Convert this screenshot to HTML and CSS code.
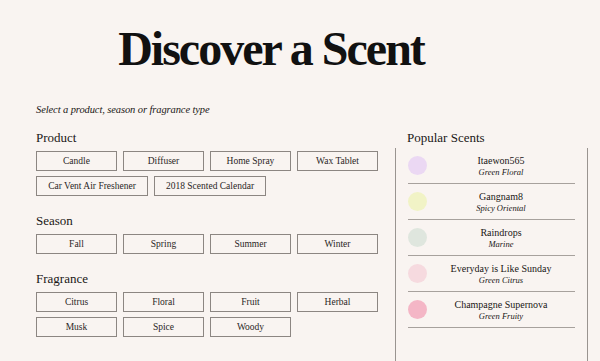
FILE: index.html
```html
<!DOCTYPE html>
<html lang="en">
<head>
  <meta charset="UTF-8" />
  <title>Discover a Scent</title>
  <link rel="stylesheet" href="styles.css">
</head>
<body>
  <h1 class="title">Discover a Scent</h1>
  <p class="intro">Select a product, season or fragrance type</p>

  <div class="layout">
    <div class="filters">
      <section class="group">
        <h2>Product</h2>
        <div class="options">
          <button class="option">Candle</button>
          <button class="option">Diffuser</button>
          <button class="option">Home Spray</button>
          <button class="option">Wax Tablet</button>
        </div>
        <div class="options options-loose">
          <button class="option wide">Car Vent Air Freshener</button>
          <button class="option wide">2018 Scented Calendar</button>
        </div>
      </section>

      <section class="group">
        <h2>Season</h2>
        <div class="options">
          <button class="option">Fall</button>
          <button class="option">Spring</button>
          <button class="option">Summer</button>
          <button class="option">Winter</button>
        </div>
      </section>

      <section class="group">
        <h2>Fragrance</h2>
        <div class="options">
          <button class="option">Citrus</button>
          <button class="option">Floral</button>
          <button class="option">Fruit</button>
          <button class="option">Herbal</button>
          <button class="option">Musk</button>
          <button class="option">Spice</button>
          <button class="option">Woody</button>
        </div>
      </section>
    </div>

    <aside class="popular">
      <h2>Popular Scents</h2>
      <ul class="scent-list">
        <li class="scent">
          <span class="dot lavender"></span>
          <div class="scent-text">
            <div class="scent-name">Itaewon565</div>
            <div class="scent-type">Green Floral</div>
          </div>
        </li>
        <li class="scent">
          <span class="dot lemon"></span>
          <div class="scent-text">
            <div class="scent-name">Gangnam8</div>
            <div class="scent-type">Spicy Oriental</div>
          </div>
        </li>
        <li class="scent">
          <span class="dot sage"></span>
          <div class="scent-text">
            <div class="scent-name">Raindrops</div>
            <div class="scent-type">Marine</div>
          </div>
        </li>
        <li class="scent">
          <span class="dot blush"></span>
          <div class="scent-text">
            <div class="scent-name">Everyday is Like Sunday</div>
            <div class="scent-type">Green Citrus</div>
          </div>
        </li>
        <li class="scent">
          <span class="dot rose"></span>
          <div class="scent-text">
            <div class="scent-name">Champagne Supernova</div>
            <div class="scent-type">Green Fruity</div>
          </div>
        </li>
      </ul>
    </aside>
  </div>
</body>
</html>
```

FILE: styles.css
```css
body {
  font-family: 'Liberation Serif', 'DejaVu Serif', serif;
  background: #f9f4f1;
  color: #1a1716;
  margin: 0;
  height: 361px;
  overflow: hidden;
}

.title {
  margin: 21px 0 0;
  font-size: 48px;
  line-height: 56px;
  font-weight: bold;
  text-align: center;
  padding-right: 58px;
  letter-spacing: -2px;
  color: #111;
}

.intro {
  margin: 25px 0 0 36px;
  font-size: 10.5px;
  line-height: 16px;
  font-style: italic;
  letter-spacing: -0.1px;
}

.layout {
  display: flex;
  margin-top: 12px;
  padding-left: 36px;
}

.filters {
  width: 341px;
}

h2 {
  margin: 0;
  font-size: 13px;
  line-height: 16px;
  font-weight: normal;
}

.group + .group {
  margin-top: 17px;
}

.options {
  display: grid;
  grid-template-columns: repeat(4, 81px);
  gap: 5px 6px;
  margin-top: 5px;
}

.options-loose {
  display: flex;
}

.option {
  height: 20px;
  padding: 0;
  background: transparent;
  border: 1px solid #8c8682;
  font-family: inherit;
  font-size: 9.5px;
  color: #2a2625;
  cursor: pointer;
}

.option.wide {
  width: 112px;
}

.popular {
  margin-left: 18px;
  width: 193px;
}

.popular h2 {
  padding-left: 12px;
}

.scent-list {
  list-style: none;
  margin: 2px 0 0;
  padding: 0 12px;
  border-left: 1px solid #9a9490;
  border-right: 1px solid #9a9490;
  height: 213px;
}

.scent {
  display: flex;
  align-items: center;
  height: 35px;
  border-bottom: 1px solid #a7a19d;
}

.dot {
  width: 19px;
  height: 19px;
  border-radius: 50%;
  flex: none;
}

.lavender { background: #ebd8f3; }
.lemon { background: #f1f3c6; }
.sage { background: #dfe6de; }
.blush { background: #f6dadf; }
.rose { background: #f4b6c6; }

.scent-text {
  flex: 1;
  text-align: center;
}

.scent-name {
  font-size: 10px;
  line-height: 12px;
}

.scent-type {
  font-size: 8.5px;
  line-height: 10px;
  font-style: italic;
}
```
